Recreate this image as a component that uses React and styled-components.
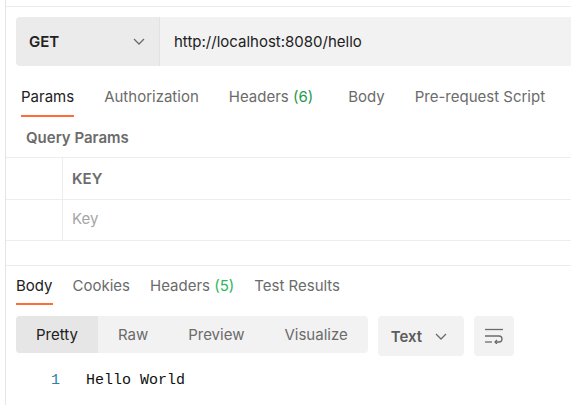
import React from "react";
import styled, { createGlobalStyle } from "styled-components";

const GlobalStyle = createGlobalStyle`
  body {
    margin: 0;
    background: #ffffff;
    font-family: Inter, "Noto Sans", sans-serif;
    overflow: hidden;
  }
`;

const Frame = styled.div`
  margin-left: 5px;
  height: 405px;
  border-left: 1px solid #e6e6e6;
  overflow: hidden;
  font-size: 15px;
  color: #6b6b6b;
`;

const TopStrip = styled.div`
  height: 6px;
  border-bottom: 1px solid #ebebeb;
`;

const UrlBar = styled.div`
  display: flex;
  height: 49px;
  margin: 10px 0 0 10px;
  border-radius: 4px 0 0 4px;
  overflow: hidden;
`;

const Method = styled.div`
  width: 144px;
  box-sizing: border-box;
  display: flex;
  align-items: center;
  justify-content: space-between;
  padding: 0 14px 0 13px;
  background: #ebebeb;
  border-right: 1px solid #e2e2e2;
  color: #212121;
  font-weight: 600;
`;

const UrlInput = styled.div`
  flex: 1;
  display: flex;
  align-items: center;
  padding-left: 14px;
  background: #f2f2f2;
  color: #212121;
`;

const Tabs = styled.div`
  display: flex;
  gap: ${(p) => p.gap}px;
  padding-left: ${(p) => p.inset}px;
  margin-top: ${(p) => p.top || 0}px;
`;

const Tab = styled.div`
  padding-top: ${(p) => p.padTop}px;
  padding-bottom: ${(p) => p.padBottom}px;
  line-height: 20px;
  white-space: nowrap;
  margin-left: ${(p) => p.shift || 0}px;
  color: ${(p) => (p.active ? "#212121" : "#6b6b6b")};
  border-bottom: 2px solid ${(p) => (p.active ? "#ff6c37" : "transparent")};
`;

const Count = styled.span`
  color: ${(p) => p.color};
`;

const QueryTitle = styled.div`
  height: 40px;
  box-sizing: border-box;
  padding: 11px 0 0 20px;
  line-height: 20px;
  font-weight: 600;
  color: #6b6b6b;
`;

const Table = styled.div`
  border-top: 1px solid #ededed;
`;

const Row = styled.div`
  display: flex;
  height: ${(p) => p.h}px;
  border-bottom: 1px solid #ededed;
`;

const CheckCell = styled.div`
  width: 56px;
  border-right: 1px solid #ededed;
`;

const KeyCell = styled.div`
  display: flex;
  align-items: center;
  padding-left: 9px;
  padding-bottom: ${(p) => (p.head ? 0 : 4)}px;
  font-weight: ${(p) => (p.head ? 600 : 400)};
  color: ${(p) => (p.head ? "#6b6b6b" : "#a6a6a6")};
`;

const Response = styled.div`
  margin-top: 24px;
  border-top: 1px solid #ebebeb;
`;

const Toolbar = styled.div`
  display: flex;
  align-items: flex-start;
  gap: 10px;
  margin-top: 11px;
  padding-left: 10px;
`;

const Segmented = styled.div`
  display: flex;
  height: 37px;
  background: #f2f2f2;
  border-radius: 4px;
  overflow: hidden;
`;

const Segment = styled.div`
  display: flex;
  align-items: center;
  padding: 0 20px;
  background: ${(p) => (p.active ? "#e6e6e6" : "transparent")};
  color: ${(p) => (p.active ? "#212121" : "#6b6b6b")};
`;

const Select = styled.div`
  width: 86px;
  height: 40px;
  box-sizing: border-box;
  display: flex;
  align-items: center;
  justify-content: space-between;
  padding: 0 17px 0 13px;
  background: #f2f2f2;
  border-radius: 4px;
  font-weight: 600;
  color: #5c5c5c;
`;

const IconButton = styled.div`
  width: 40px;
  height: 40px;
  display: flex;
  align-items: center;
  justify-content: center;
  background: #f2f2f2;
  border-radius: 4px;
`;

const CodeLine = styled.div`
  display: flex;
  margin-top: 15px;
  line-height: 20px;
  font-family: "Liberation Mono", "DejaVu Sans Mono", monospace;
  font-size: 15px;
`;

const LineNo = styled.span`
  width: 54px;
  text-align: right;
  color: #2f80a3;
`;

const Code = styled.span`
  margin-left: 26px;
  color: #111111;
`;

const Chevron = () => (
  <svg width="12" height="7" viewBox="0 0 12 7" fill="none">
    <polyline points="1,1 6,6 11,1" stroke="#6b6b6b" strokeWidth="1.3" />
  </svg>
);

const WrapIcon = () => (
  <svg width="20" height="16" viewBox="0 0 20 16" fill="none" stroke="#6b6b6b" strokeWidth="1.3">
    <path d="M1 1.5 H19" />
    <path d="M1 8 H15 a3 3 0 0 1 0 6 H11" />
    <path d="M13 12 L11 14 L13 16" />
    <path d="M1 14 H8" />
  </svg>
);

export default function App() {
  return (
    <>
      <GlobalStyle />
      <Frame>
        <TopStrip />
        <UrlBar>
          <Method>
            GET
            <Chevron />
          </Method>
          <UrlInput>http://localhost:8080/hello</UrlInput>
        </UrlBar>

        <Tabs gap={30} inset={15} top={16}>
          <Tab active padTop={5} padBottom={8}>Params</Tab>
          <Tab padTop={5} padBottom={8}>Authorization</Tab>
          <Tab padTop={5} padBottom={8}>
            Headers <Count color="#1f9a4b">(6)</Count>
          </Tab>
          <Tab padTop={5} padBottom={8} shift={5}>Body</Tab>
          <Tab padTop={5} padBottom={8}>Pre-request Script</Tab>
        </Tabs>

        <QueryTitle>Query Params</QueryTitle>
        <Table>
          <Row h={41}>
            <CheckCell />
            <KeyCell head>KEY</KeyCell>
          </Row>
          <Row h={40}>
            <CheckCell />
            <KeyCell>Key</KeyCell>
          </Row>
        </Table>

        <Response>
          <Tabs gap={20} inset={10}>
            <Tab active padTop={10} padBottom={7}>Body</Tab>
            <Tab padTop={10} padBottom={7}>Cookies</Tab>
            <Tab padTop={10} padBottom={7}>
              Headers <Count color="#2bb95c">(5)</Count>
            </Tab>
            <Tab padTop={10} padBottom={7}>Test Results</Tab>
          </Tabs>

          <Toolbar>
            <Segmented>
              <Segment active>Pretty</Segment>
              <Segment>Raw</Segment>
              <Segment>Preview</Segment>
              <Segment>Visualize</Segment>
            </Segmented>
            <Select>
              Text
              <Chevron />
            </Select>
            <IconButton>
              <WrapIcon />
            </IconButton>
          </Toolbar>

          <CodeLine>
            <LineNo>1</LineNo>
            <Code>Hello World</Code>
          </CodeLine>
        </Response>
      </Frame>
    </>
  );
}
